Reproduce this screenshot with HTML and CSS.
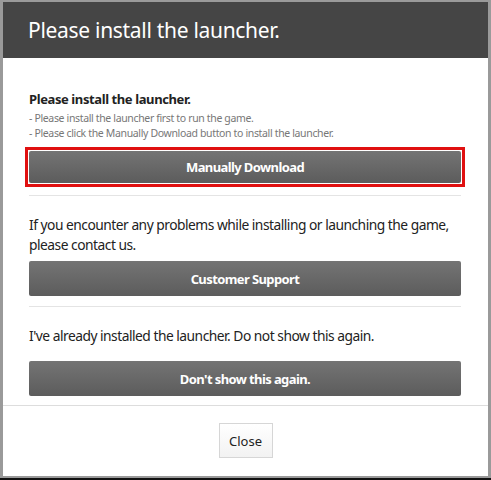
FILE: index.html
```html
<!DOCTYPE html>
<html>
<head>
<meta charset="utf-8">
<link rel="stylesheet" href="styles.css">
</head>
<body>
<div class="frame">
  <div class="dialog">
    <div class="header"><h1 class="title">Please install the launcher.</h1></div>
    <div class="content">
      <div class="section first">
        <h2 class="heading">Please install the launcher.</h2>
        <p class="note">- Please install the launcher first to run the game.</p>
        <p class="note">- Please click the Manually Download button to install the launcher.</p>
        <div class="highlight"><button class="btn">Manually Download</button></div>
      </div>
      <div class="section second">
        <p class="text">If you encounter any problems while installing or launching the game, please contact us.</p>
        <button class="btn">Customer Support</button>
      </div>
      <div class="section third">
        <p class="text">I've already installed the launcher. Do not show this again.</p>
        <button class="btn">Don't show this again.</button>
      </div>
    </div>
    <div class="footer"><button class="close">Close</button></div>
  </div>
</div>
</body>
</html>
```
FILE: styles.css
```css
* { box-sizing: border-box; }
html, body { margin: 0; padding: 0; }
body { width: 491px; height: 480px; background: #fff; font-family: "Noto Sans", "Open Sans", sans-serif; }
.frame { width: 491px; height: 480px; border-bottom: 2px solid #111; background: #9a9a9a; padding: 2px 3px 2px 3px; }
.dialog { background: #fff; height: 100%; display: flex; flex-direction: column; }
.header { background: #454545; height: 56px; display: flex; align-items: center; padding-left: 25px; }
.title { margin: 0; color: #fff; font-weight: 400; font-size: 21px; letter-spacing: -0.3px; }
.content { padding: 0 27px 0 26px; }
.section { border-bottom: 1px solid #e4e4e4; }
.first { padding: 32px 0 8px; }
.second { padding: 19px 0 10px; }
.third { padding: 19px 0 9px; }
.heading { margin: 0 0 3px; font-size: 13px; font-weight: 700; color: #222; letter-spacing: -0.4px; line-height: 18px; }
.note { margin: 0; font-size: 10.5px; color: #777; line-height: 15px; letter-spacing: -0.35px; }
.text { margin: 0 0 6px; font-size: 13.8px; color: #222; line-height: 20px; letter-spacing: -0.5px; }
.third .text { margin-bottom: 15px; }
.highlight { border: 3px solid #e01010; margin: 6px -4px 0; padding: 1px; background: #fff; }
.btn { display: block; width: 100%; height: 35px; border: 0; border-radius: 2px; background: linear-gradient(#747474, #5c5c5c); color: #fff; font-family: inherit; font-weight: 700; font-size: 13px; letter-spacing: -0.6px; }
.highlight .btn { height: 32px; }
.footer { border-top: 1px solid #ddd; margin-top: -1px; flex: 1; display: flex; justify-content: center; padding-top: 17px; }
.close { width: 54px; height: 35px; background: linear-gradient(#fff, #f2f2f2); border: 1px solid #d6d6d6; font-family: inherit; font-size: 13px; color: #222; }
```
